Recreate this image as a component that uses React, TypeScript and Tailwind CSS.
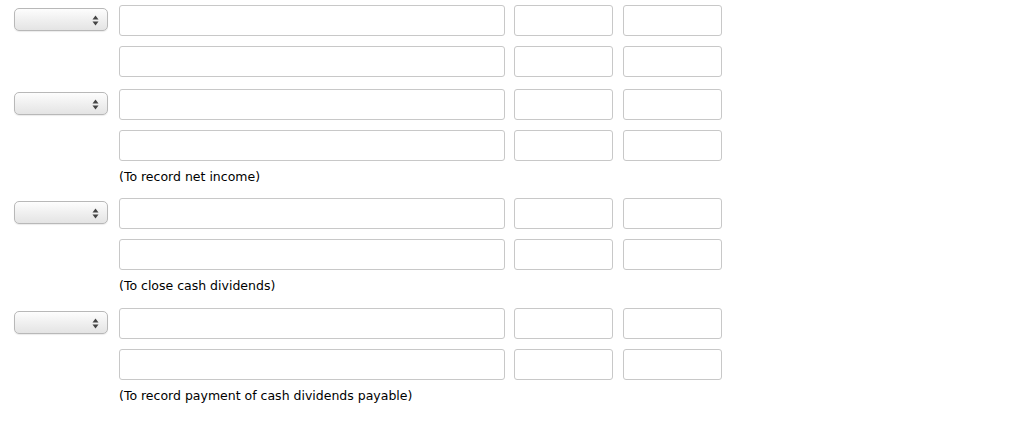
import React from "react";

function Select() {
  return (
    <div className="relative w-[94px] h-[23px] rounded-[5px] border border-[#b8b8b8] bg-gradient-to-b from-[#fdfdfd] via-[#f0f0f0] to-[#e4e4e4] shadow-[0_1px_1px_rgba(0,0,0,0.08)]">
      <svg className="absolute right-[8px] top-[6px]" width="7" height="11" viewBox="0 0 7 11">
        <path d="M3.5 0.5 L6.5 4.5 L0.5 4.5 Z" fill="#444" />
        <path d="M3.5 10.5 L6.5 6.5 L0.5 6.5 Z" fill="#444" />
      </svg>
    </div>
  );
}

function Row({ select }: { select?: boolean }) {
  return (
    <div className="flex items-start">
      <div className="w-[105px] shrink-0 pt-[3px]">{select ? <Select /> : null}</div>
      <div className="w-[386px] h-[31px] rounded-[3px] border border-[#c8c8c8] bg-white" />
      <div className="w-[99px] h-[31px] ml-[9px] rounded-[3px] border border-[#c8c8c8] bg-white" />
      <div className="w-[99px] h-[31px] ml-[10px] rounded-[3px] border border-[#c8c8c8] bg-white" />
    </div>
  );
}

function Group({ note }: { note?: string }) {
  return (
    <div className="flex flex-col">
      <Row select />
      <div className="h-[10.2px]" />
      <Row />
      {note ? (
        <div className="pl-[105px] mt-[6px] h-[20px] leading-[20px] text-[12.5px] text-black" style={{ fontFamily: '"DejaVu Sans", Verdana, sans-serif' }}>
          {note}
        </div>
      ) : null}
    </div>
  );
}

export default function App() {
  return (
    <div className="w-[1024px] h-[423px] bg-white pl-[14px] pt-[5px] flex flex-col gap-[11.4px]">
      <Group />
      <Group note="(To record net income)" />
      <Group note="(To close cash dividends)" />
      <Group note="(To record payment of cash dividends payable)" />
    </div>
  );
}
